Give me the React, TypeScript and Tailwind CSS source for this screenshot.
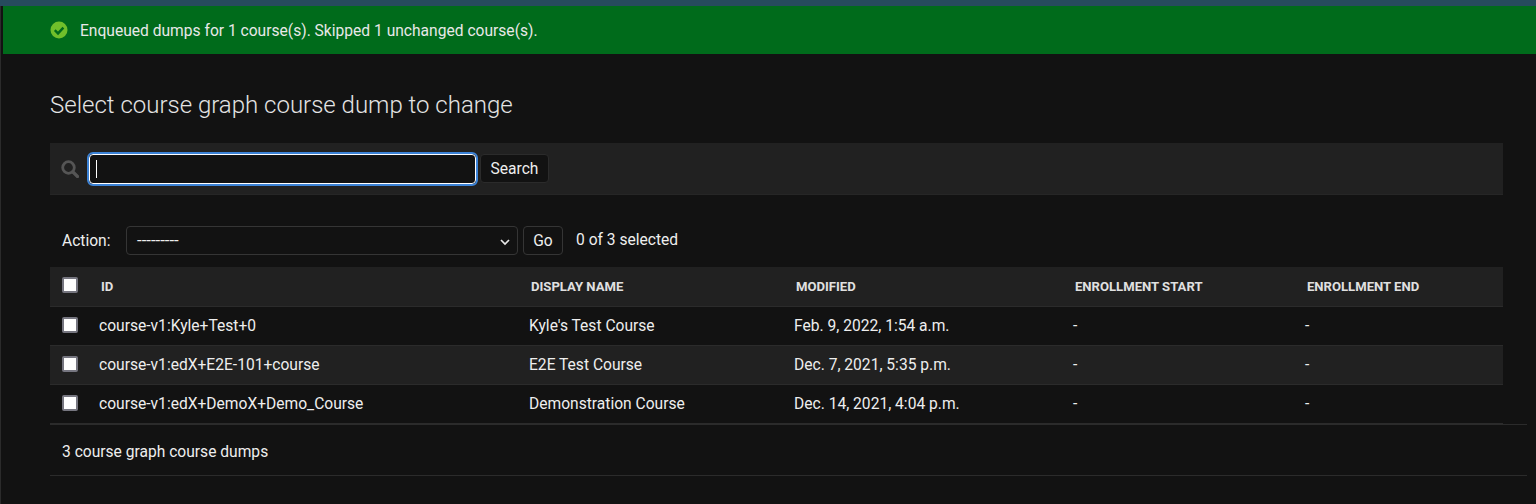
const rows = [
  { id: "course-v1:Kyle+Test+0", name: "Kyle's Test Course", modified: "Feb. 9, 2022, 1:54 a.m." },
  { id: "course-v1:edX+E2E-101+course", name: "E2E Test Course", modified: "Dec. 7, 2021, 5:35 p.m." },
  { id: "course-v1:edX+DemoX+Demo_Course", name: "Demonstration Course", modified: "Dec. 14, 2021, 4:04 p.m." },
];

function CheckBox() {
  return <span className="-mt-[2px] block h-[16px] w-[16px] rounded-[2px] border-2 border-[#767680] bg-white" />;
}

function SuccessIcon() {
  return (
    <svg width="18" height="18" viewBox="0 0 18 18" className="shrink-0">
      <circle cx="9" cy="9" r="8.5" fill="#70bf2b" />
      <path d="M4.8 9.2l3.2 3.2 5.4-5.8" fill="none" stroke="#006b1b" strokeWidth="2.4" />
    </svg>
  );
}

function SearchIcon() {
  return (
    <svg width="18" height="18" viewBox="0 0 18 18" className="-ml-[1px] shrink-0">
      <circle cx="7.5" cy="7.5" r="5.8" fill="none" stroke="#555555" strokeWidth="2.8" />
      <path d="M12 12l4.5 4.5" stroke="#555555" strokeWidth="3.2" strokeLinecap="round" />
    </svg>
  );
}

export default function App() {
  return (
    <div className="h-[504px] overflow-hidden bg-[#121212] font-['Roboto',sans-serif] text-[15.6px] text-[#eeeeee]">
      <div className="h-[6px] bg-[#264b5d]" />
      <div className="flex h-[498px] border-l border-[#2b2b2b]">
        <div className="w-[2px] shrink-0 bg-[#121212]" />
        <main className="min-w-0 flex-1">
          <div className="flex h-[48px] items-center gap-[12px] bg-[#006b1b] pl-[47px] text-[#e8e8e8]">
            <SuccessIcon />
            <span className="mt-[3px]">Enqueued dumps for 1 course(s). Skipped 1 unchanged course(s).</span>
          </div>

          <div className="pl-[47px] pr-[9px]">
            <h1 className="mb-[23px] mt-[37px] h-[29px] text-[24px] font-light leading-[29px] text-[#e4e4e4]">
              Select course graph course dump to change
            </h1>

            <div className="mr-[24px] flex h-[52px] items-center border-b border-[#262626] bg-[#212121] pl-[12px]">
              <SearchIcon />
              <div className="ml-[10px] flex h-[30px] w-[387px] items-center rounded-[4px] border border-white bg-[#121212] pl-[6px] outline-2 outline-[#3b82d6]">
                <span className="h-[18px] w-px bg-white" />
              </div>
              <button className="ml-[4px] h-[29px] w-[69px] rounded-[4px] border border-[#2b2b2b] bg-[#121212] pt-[3px] text-[#eeeeee]">
                Search
              </button>
            </div>

            <div className="mt-[31px] flex h-[29px] items-center pl-[12px]">
              <span className="w-[64px] pt-[2px]">Action:</span>
              <div className="relative flex h-[29px] w-[392px] items-center rounded-[4px] border border-[#353535] bg-[#121212] pl-[10px] text-[16.8px]">
                ---------
                <svg width="12" height="12" viewBox="0 0 12 12" className="absolute right-[6px] top-[9px]">
                  <path d="M2 4l4 4 4-4" fill="none" stroke="#e8e8e8" strokeWidth="1.7" />
                </svg>
              </div>
              <button className="ml-[5px] h-[29px] w-[40px] rounded-[4px] border border-[#353535] bg-[#121212] pt-[2px]">Go</button>
              <span className="ml-[13px]">0 of 3 selected</span>
            </div>

            <table className="mr-[24px] mt-[12px] w-[1453px] table-fixed border-collapse">
              <colgroup>
                <col className="w-[49px]" />
                <col className="w-[430px]" />
                <col className="w-[265px]" />
                <col className="w-[279px]" />
                <col className="w-[232px]" />
                <col />
              </colgroup>
              <thead>
                <tr className="h-[39px] border-b border-[#2b2b2b] bg-[#212121] text-left text-[13.1px] font-bold text-[#e0e0e0]">
                  <th className="pl-[12px]"><CheckBox /></th>
                  <th className="pl-[2px] pt-[1px] font-bold">ID</th>
                  <th className="pl-[2px] pt-[1px] font-bold">DISPLAY NAME</th>
                  <th className="pl-[2px] pt-[1px] font-bold">MODIFIED</th>
                  <th className="pl-[2px] pt-[1px] font-bold">ENROLLMENT START</th>
                  <th className="pl-[2px] pt-[1px] font-bold">ENROLLMENT END</th>
                </tr>
              </thead>
              <tbody>
                {rows.map((row, index) => (
                  <tr key={row.id} className={index === 1 ? "h-[39px] border-y border-[#2b2b2b] bg-[#212121]" : "h-[39px]"}>
                    <td className="pl-[12px]"><CheckBox /></td>
                    <td className="pt-[2px]">{row.id}</td>
                    <td className="pt-[2px]">{row.name}</td>
                    <td className="pt-[2px]">{row.modified}</td>
                    <td className="pt-[2px]">-</td>
                    <td className="pt-[2px]">-</td>
                  </tr>
                ))}
              </tbody>
            </table>

            <div className="mr-[24px] h-px bg-[#2b2b2b]" />
            <div className="flex h-[52px] items-center border-y border-[#2b2b2b] pl-[12px] pt-[6px]">3 course graph course dumps</div>
          </div>
        </main>
      </div>
    </div>
  );
}
